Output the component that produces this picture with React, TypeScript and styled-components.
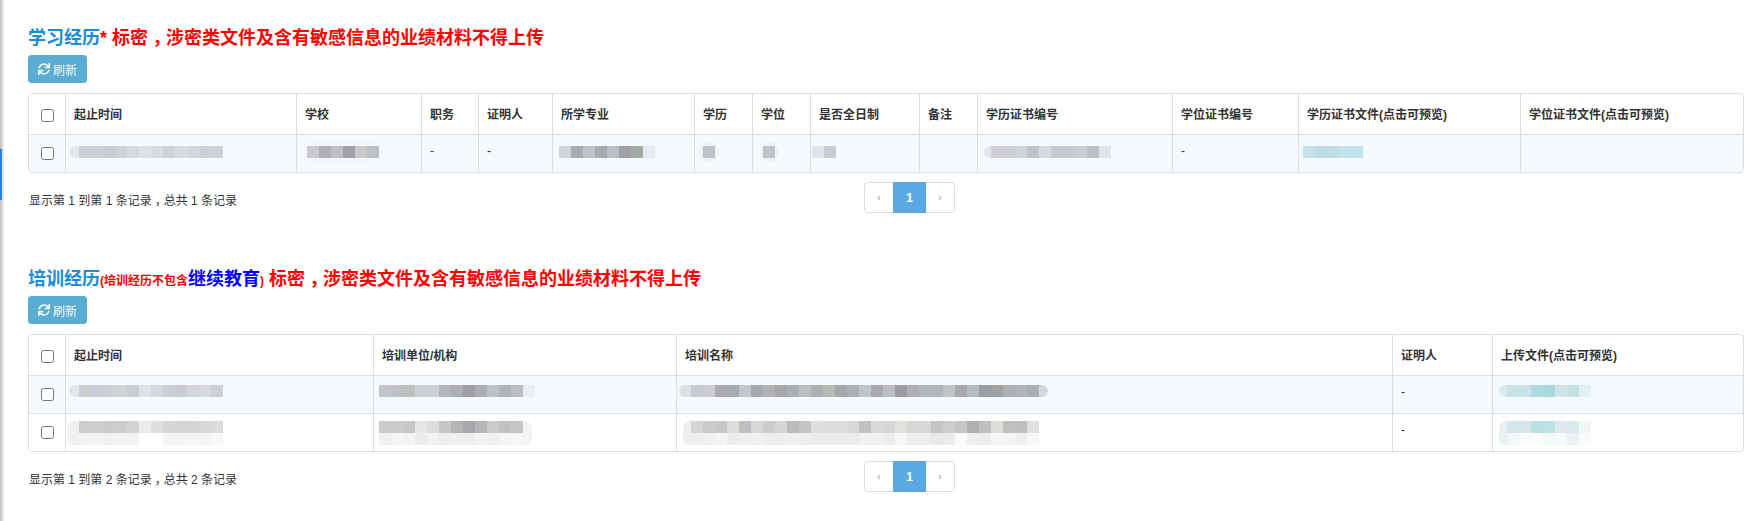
import React from 'react'
import styled, { createGlobalStyle } from 'styled-components'
import { FaSync } from 'react-icons/fa'

const GlobalStyle = createGlobalStyle`
  html, body {
    margin: 0;
    padding: 0;
    background: #fff;
    font-family: "Liberation Sans", "Noto Sans CJK SC", sans-serif;
    font-size: 12px;
    color: #333;
  }
`

type Blot = {
  inset?: number
  lead?: string
  leadWidth?: number
  tail?: string
  halo?: string
  rows: string[][]
}

type CellValue = string | Blot | null

type Section = {
  widths: number[]
  headers: string[]
  rows: CellValue[][]
  blotTop: number[]
  total: number
}

const grey = (s: string) => s.split(' ').map(c => `#${c}`)

const study: Section = {
  widths: [37, 231, 125, 57, 74, 142, 58, 58, 109, 58, 195, 126, 222, 222],
  headers: ['起止时间', '学校', '职务', '证明人', '所学专业', '学历', '学位', '是否全日制', '备注', '学历证书编号', '学位证书编号', '学历证书文件(点击可预览)', '学位证书文件(点击可预览)'],
  total: 1,
  blotTop: [2],
  rows: [
    [
      { inset: -5, lead: '#e6e7ea', rows: [grey('cfd0d2 ccd2d9 c9cbce cfd2d5 d5d9e0 dfe1e4 d9dbde cfd3d8 d8dade d5d7da ced2d8 d0d3d7')] },
      { inset: 2, halo: '#f4f6f8', rows: [grey('c8cacd aeb0b4 bfc1c4 a0a0a6 c8cacc bdc0c3')] },
      '-',
      '-',
      { inset: -2, rows: [grey('d3d4d7 a9abaf c0c3c8 a8aaac bcbfc2 a1a1a5 a7a9a9 e4e9f3')] },
      { inset: 0, halo: '#eff3f7', rows: [grey('bfc2c5')] },
      { inset: 2, halo: '#eef2f6', rows: [grey('c1c4c6')] },
      { inset: -7, rows: [grey('e2e4e6 c9ccd0')] },
      null,
      { inset: -2, lead: '#e4e7ea', leadWidth: 7, rows: [grey('d0d0d5 ced0d3 d2d3d6 c0c2c9 d6d8d9 c8cacc c7c9cb cbcdcf bcbfc7 e0e3e7')] },
      '-',
      { inset: -4, rows: [grey('c5e2e9 bcdde2 bfdfe5 c3e3ea c3e3ea')] },
      null,
    ],
  ],
}

const training: Section = {
  widths: [37, 308, 303, 716, 100, 250],
  headers: ['起止时间', '培训单位/机构', '培训名称', '证明人', '上传文件(点击可预览)'],
  total: 2,
  blotTop: [0, -2],
  rows: [
    [
      { inset: -5, lead: '#e3e5e8', rows: [grey('cdced0 c9cfda ced0d3 cfd2d6 c9ccd4 dfe1e4 d5d8da cbced4 c9cbce d3d5d8 d7d9dc ced0d4')] },
      { inset: -3, rows: [grey('c3c5c8 bfc1c4 bdc0bf cdd2d4 ccd1d1 b5b6b9 aeafb1 9e9da3 adaeb2 bcc3c8 b1b4b5 bdbfc2 e9eef4')] },
      { inset: -6, lead: '#dcdfe3', leadWidth: 12, tail: '#d3d8dc', rows: [grey('c5cdcf cbcdd0 adabaf a7acaf c4c7c9 a5aaae b3b3b6 a6a7a9 a9aeb0 bdbfc0 a9b0b6 b8bab6 a7a8aa aeb1b3 c1c5c6 aaa9ae bcbec3 9c9da1 b1afb4 b3b6ba b3b6b9 bfc3c3 a9a8ad b9bcbf 9a9ea1 a0a1a3 b0b0b2 b0b6b8 aab0b0')] },
      '-',
      { inset: -2, lead: '#daecf0', leadWidth: 8, rows: [grey('c8e4e9 c9e4e8 afdbe0 a9d8de cfe3ea c5e1e6 e1f0f5')] },
    ],
    [
      { inset: -7, lead: '#f1f1f1', leadWidth: 12, rows: [grey('cdcdcd cfcfcf cbcbcc cdcdcd d2d2d2 ececec e0e0e0 d6d6d6 d4d4d4 d4d4d4 d8d8d8 dcdcdc'), grey('f3f3f3 f4f4f3 f1f1f1 f3f3f3 f3f3f3 ffffff ffffff f5f5f5 f5f5f5 f6f6f6 f4f4f4 f8f8f8')] },
      { inset: -3, tail: '#f3f3f3', rows: [grey('cccaca cbc9c9 c7c6c4 e5e6e8 dddedb c7c8c6 b5b6b3 a9a6ab b6b5b8 c8cccc c2c1be c6c6c8'), grey('f0f0f0 f5f5f5 f3f3f3 ebebeb f1f1f1 ededed f0efed eeeeee f3f3f3 f0f0f0 f4f4f4 f7f7f7')] },
      { inset: -2, lead: '#eeeeee', leadWidth: 8, rows: [grey('d6d4d5 cbc9ca c6c6c8 dcdcd8 bcc0c3 d6d8da cfcccd d6d5d0 bbbbbb c4c4c4 e0e0db dcdcdc dcdcdc d9d8d5 bfc0c2 d9d9d6 d4d6d5 e4e1dc d7d7da d7d7da c5c5c2 cdcdcd c6c5c2 aeafb1 bfbfc1 deded9 bcc1c2 bfbfbf dfdfdd'), grey('eeeeee f1f1f1 f5f3f3 ececec efefef f3f1ef ededed ededed eeeeee ededed ebebeb ebebeb ebebeb ebebeb f1f1f1 f1f1f1 ececf0 f7f6f4 ededed ededed e9e9e9 ebebeb fbfbfb eeeeee ececec f5f5f3 f3f5f4 efefef f8f8f8')] },
      '-',
      { inset: -2, lead: '#e7f2f3', leadWidth: 8, rows: [grey('d3e8ea d6e6e8 b7e1e4 bde1e4 deeaef dbeaed f1f7f9'), grey('f1f7f8 f7fbfb fcfefe f1f8f8 f7fafb e9f3f3 f8fbfb')] },
    ],
  ],
}

const Mosaic = ({ blot, top }: { blot: Blot, top: number }) => (
  <MosaicBox $inset={blot.inset ?? 0} $top={top}>
    {blot.lead && <LeadPixel $c={blot.lead} $w={blot.leadWidth ?? 10} />}
    <PixelStack $halo={blot.halo}>
      {blot.rows.map((row, i) => (
        <PixelRow key={i}>
          {row.map((c, j) => <Pixel key={j} $c={c} />)}
        </PixelRow>
      ))}
    </PixelStack>
    {blot.tail && <TailPixel $c={blot.tail} />}
  </MosaicBox>
)

const RecordTable = ({ data }: { data: Section }) => (
  <TableFrame>
    <Table>
      <colgroup>
        {data.widths.map((w, i) => <Col key={i} $w={w} />)}
      </colgroup>
      <thead>
        <tr>
          <CheckHead><input type="checkbox" /></CheckHead>
          {data.headers.map(h => <Th key={h}>{h}</Th>)}
        </tr>
      </thead>
      <tbody>
        {data.rows.map((row, i) => (
          <Row key={i} $odd={i % 2 === 0}>
            <CheckCell><input type="checkbox" /></CheckCell>
            {row.map((cell, j) => (
              <Td key={j}>
                {cell && (typeof cell === 'string' ? cell : <Mosaic blot={cell} top={data.blotTop[i]} />)}
              </Td>
            ))}
          </Row>
        ))}
      </tbody>
    </Table>
  </TableFrame>
)

const Block = ({ title, data }: { title: React.ReactNode, data: Section }) => (
  <Panel>
    <Title>{title}</Title>
    <RefreshButton type="button"><FaSync size={12} />刷新</RefreshButton>
    <RecordTable data={data} />
    <Footer>
      <Summary>显示第 1 到第 {data.total} 条记录<Comma>，</Comma>总共 {data.total} 条记录</Summary>
      <Pager>
        <PageArrow>‹</PageArrow>
        <PageCurrent>1</PageCurrent>
        <PageArrow>›</PageArrow>
      </Pager>
    </Footer>
  </Panel>
)

const Notice = () => (
  <Warn> 标密<Comma>，</Comma>涉密类文件及含有敏感信息的业绩材料不得上传</Warn>
)

export default function App() {
  return (
    <>
      <GlobalStyle />
      <Page>
        <SideEdge />
        <Content>
          <Block
            data={study}
            title={<>
              <Blue>学习经历</Blue><Warn>*</Warn><Notice />
            </>}
          />
          <Block
            data={training}
            title={<>
              <Blue>培训经历</Blue><Small>(培训经历不包含</Small><Pure>继续教育</Pure><Small>)</Small><Notice />
            </>}
          />
        </Content>
      </Page>
    </>
  )
}

const Page = styled.div`
  display: flex;
  position: relative;
  width: 1748px;
  height: 521px;
  overflow: hidden;
`

const SideEdge = styled.div`
  flex: 0 0 5px;
  background: linear-gradient(to right, #bdbdbd, #dedede 50%, #fff);
  &::after {
    content: '';
    position: absolute;
    left: 0;
    top: 149px;
    width: 1.5px;
    height: 51px;
    background: #2a7de1;
  }
`

const Content = styled.div`
  flex: 1;
  padding: 28px 4px 0 23px;
  display: flex;
  flex-direction: column;
  gap: 56px;
`

const Panel = styled.section`
  display: flex;
  flex-direction: column;
`

const Title = styled.h3`
  margin: 0;
  height: 20px;
  line-height: 20px;
  font-size: 18px;
  font-weight: bold;
  white-space: pre;
`

const Blue = styled.span`
  color: #1a8cd8;
`

const Warn = styled.span`
  color: #f00;
`

const Comma = styled.span`
  display: inline-block;
  width: 1em;
  text-align: center;
  font-feature-settings: "halt";
`

const Small = styled.span`
  color: #f00;
  font-size: 12px;
  font-weight: bold;
`

const Pure = styled.span`
  color: #00f;
`

const RefreshButton = styled.button`
  margin-top: 7px;
  align-self: flex-start;
  display: flex;
  align-items: center;
  gap: 3px;
  width: 59px;
  height: 28px;
  padding: 0 0 0 9px;
  border: 1px solid #5bacd2;
  border-radius: 3px;
  background: #5bacd2;
  color: #f2f8fb;
  font: inherit;
  font-size: 12px;
`

const TableFrame = styled.div`
  margin-top: 10px;
  border: 1px solid #ddd;
  border-radius: 4px;
  overflow: hidden;
`

const Table = styled.table`
  width: 100%;
  table-layout: fixed;
  border-collapse: separate;
  border-spacing: 0;
`

const Col = styled.col<{ $w: number }>`
  width: ${p => p.$w}px;
`

const Th = styled.th`
  height: 41px;
  padding: 0 8px 1px;
  box-sizing: border-box;
  text-align: left;
  font-size: 12px;
  font-weight: bold;
  color: #333;
  border-right: 1px solid #ddd;
  border-bottom: 1px solid #ddd;
  white-space: nowrap;
  &:last-child {
    border-right: 0;
  }
`

const CheckHead = styled(Th)`
  padding: 3px 0 0;
  input {
    display: block;
    margin: 0 auto;
  }
`

const Row = styled.tr<{ $odd: boolean }>`
  background: ${p => (p.$odd ? '#f5fafe' : '#fff')};
  &:last-child td {
    height: 37px;
    border-bottom: 0;
  }
`

const Td = styled.td`
  height: 38px;
  padding: 9px 8px 0;
  box-sizing: border-box;
  vertical-align: top;
  font-size: 12px;
  line-height: 14px;
  color: #333;
  border-right: 1px solid #ddd;
  border-bottom: 1px solid #ddd;
  &:last-child {
    border-right: 0;
  }
`

const CheckCell = styled(Td)`
  padding: 0;
  vertical-align: middle;
  input {
    display: block;
    margin: 0 auto;
  }
`

const MosaicBox = styled.div<{ $inset: number, $top: number }>`
  display: flex;
  margin-left: ${p => p.$inset}px;
  margin-top: ${p => p.$top}px;
`

const LeadPixel = styled.div<{ $c: string, $w: number }>`
  flex: 0 0 ${p => p.$w}px;
  border-radius: 7px 0 0 7px;
  background: ${p => p.$c};
`

const TailPixel = styled.div<{ $c: string }>`
  flex: 0 0 9px;
  border-radius: 0 7px 7px 0;
  background: ${p => p.$c};
`

const PixelStack = styled.div<{ $halo?: string }>`
  display: flex;
  flex-direction: column;
  box-shadow: ${p => (p.$halo ? `0 0 0 4px ${p.$halo}` : 'none')};
  border-radius: 6px;
`

const PixelRow = styled.div`
  display: flex;
`

const Pixel = styled.div<{ $c: string }>`
  width: 12px;
  height: 12px;
  background: ${p => p.$c};
`

const Footer = styled.div`
  display: grid;
  grid-template-columns: 836px auto;
  justify-content: start;
  align-items: center;
  margin-top: 9px;
`

const Summary = styled.div`
  padding: 3px 0 0 1px;
  font-size: 12px;
  color: #333;
`

const Pager = styled.div`
  display: flex;
  width: 91px;
  height: 31px;
  box-sizing: border-box;
  border: 1px solid #ddd;
  border-radius: 4px;
`

const PageArrow = styled.div`
  flex: 1;
  display: flex;
  align-items: center;
  justify-content: center;
  font-size: 10px;
  color: #8a94b8;
`

const PageCurrent = styled.div`
  flex: 0 0 33px;
  margin: -1px 0;
  display: flex;
  align-items: center;
  justify-content: center;
  background: #5ba9e4;
  color: #fff;
  font-size: 12px;
  font-weight: bold;
`
